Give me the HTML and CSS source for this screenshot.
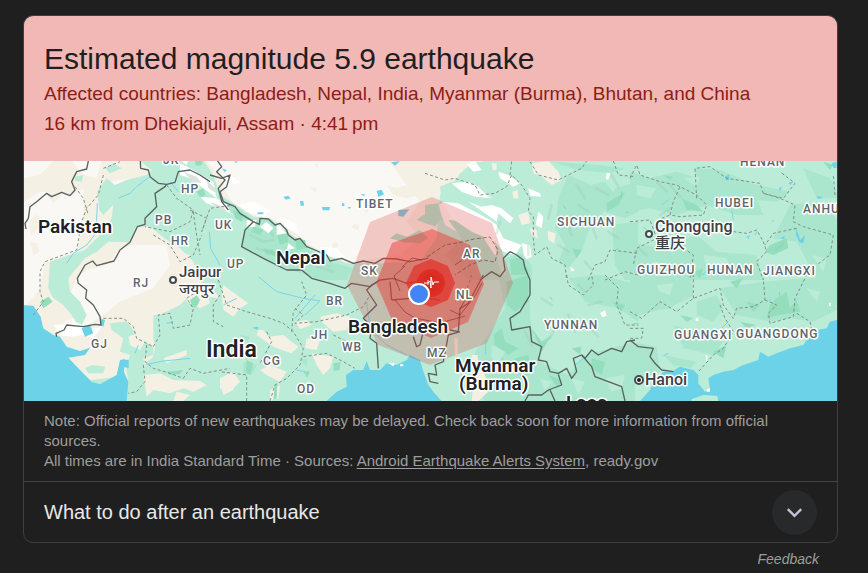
FILE: index.html
```html
<!DOCTYPE html>
<html lang="en">
<head>
<meta charset="utf-8">
<meta name="viewport" content="width=device-width, initial-scale=1">
<title>Earthquake alert</title>
<link rel="stylesheet" href="styles.css">
</head>
<body>
<main class="page">
<article class="card">
<header class="alert">
<h1 class="alert-title">Estimated magnitude 5.9 earthquake</h1>
<p class="alert-line">Affected countries: Bangladesh, Nepal, India, Myanmar (Burma), Bhutan, and China</p>
<p class="alert-line">16 km from Dhekiajuli, Assam · 4:41&#8239;pm</p>
</header>
<svg class="map" viewBox="24 161 813 240" preserveAspectRatio="xMidYMid slice" role="img" aria-label="Map of the affected area">
<defs>
<radialGradient id="core"><stop offset="0" stop-color="#d3241d"/><stop offset="1" stop-color="#df3028"/></radialGradient>
</defs>
<rect class="mint" x="24" y="161" width="813" height="240"/>
<g transform="scale(.33333333)">
<!-- north-west land -->
<g transform="translate(60 465)">
<path class="sand" d="M0 0H600L560 380L600 430L510 420L480 450L420 480L410 560L390 640L330 690L320 738H0Z"/>
<path class="pale" d="M12 140L60 110L160 120L190 100L190 200L170 290L75 320L60 400L20 450H12ZM140 0H250L230 70L190 60ZM200 345L260 330L300 280L340 270L440 270L450 330L400 400L300 440L250 480L160 540L130 500L190 480L150 420L170 370ZM265 80L330 70L300 140L260 170L250 120ZM12 18H100L60 60L12 70Z"/>
<path class="sand" d="M25 205L45 180L70 190L60 215L35 240ZM80 120L110 95L125 125L100 145ZM30 260L50 265L60 290L40 300Z"/>
<path class="mint" d="M360 18L395 45L380 60L320 75L285 90L260 70L232 110L238 165L250 180L280 150L275 190L240 240L195 285L90 320L85 400L100 430L130 450L155 480L180 520L200 480L180 440L150 410L145 370L165 345L195 310L230 290L265 260L330 262L350 215L390 215L440 255L480 280L520 320L540 375L560 400H700V0H360ZM165 65L190 60L185 80L165 78ZM255 40L280 25L305 40L270 55Z"/>
<path class="sand" d="M355 230L380 215L400 220L395 240L370 250ZM450 310L475 290L510 300L505 330L480 345Z"/>
<path class="leaf" d="M525 18H548L545 30L528 32ZM530 110L550 100L557 120L540 128ZM60 440L85 425L98 440L70 460ZM510 425L530 415L540 435L525 460L508 445Z"/>
<path class="snow" d="M480 25L510 40L545 60L580 80L590 130L550 100L510 70L480 60ZM540 125L590 130L640 160V180L600 160L560 145ZM460 0H510L500 30Z"/>
<path class="shade" d="M490 50L530 65L545 85L520 80ZM560 75L585 100L590 115L565 100ZM570 140L610 155L620 170L590 160Z"/>
<path class="river" d="M232 145L230 190L228 235L200 270L160 295L140 325M385 68L350 95L330 115L295 130M568 230L572 280L600 330M450 80L475 110"/>
</g>
<!-- Gujarat and central India -->
<g transform="translate(60 825)">
<path class="snow" d="M100 150L180 145L200 165L245 155L220 190L180 190L120 180Z"/>
<path class="sand" d="M120 190L190 180L260 200L300 250L290 300L235 328L145 250L200 240L205 220L150 215Z"/>
<path class="mint" d="M270 145L320 140L360 190L400 215L400 240L370 250L380 300L350 378H318L325 320L318 280L330 240L300 230L310 190L275 165ZM195 280L215 270L255 275L250 295L205 295ZM400 120L640 110V378H340L380 260L410 240L400 190ZM210 315L300 305L290 330L240 338Z"/>
<path class="sand" d="M325 185L350 175L375 200L360 225L330 210ZM370 300L420 295L460 315L540 318L560 330L520 350L490 340L450 355L400 345L380 365ZM430 250L500 225L500 240L440 265ZM500 80L540 100L570 85L560 55L500 60ZM600 320L650 310L640 345L610 360ZM470 350L510 360L490 378H460Z"/>
<path class="leaf" d="M440 290L490 285L480 297L450 300ZM510 75L530 60L540 75L530 95L515 90Z"/>
<path class="water" d="M0 90L40 92L62 125L70 160L100 180L120 185L140 215L180 228L210 218L195 240L145 248L180 285L215 320L240 328L290 300L300 255L315 252L312 290L325 320L320 378H0ZM185 160L210 150L220 175L195 185ZM240 130L255 135L250 155L240 150ZM313 254H326V280L313 276Z"/>
<path class="river" d="M380 268L430 258L510 250M345 235L355 210M440 145L460 140"/>
</g>
<!-- Tibet and the Himalaya -->
<g transform="translate(660 465)">
<path class="sand" d="M-60 0H840L800 30L720 60L660 120L650 250L600 320L480 325L380 325L320 300L260 270L200 230L150 190L100 185L40 145L0 120L-20 60Z"/>
<path class="pale" d="M-50 10H500L560 90L600 140L560 200L600 250L540 300L400 320L330 300L270 270L220 230L150 190L100 180L40 145L10 100L0 60Z"/>
<path class="snow" d="M60 150L100 140L150 165L130 185L80 170ZM180 190L220 200L240 240L200 220ZM30 60L60 80L40 90ZM300 275L350 280L380 310L330 305Z"/>
<path class="sand" d="M270 95L290 100L285 115ZM400 205L420 210L415 225L395 218ZM335 268L350 260L355 275L340 280ZM430 165L450 160L440 175ZM500 90L530 100L560 90L600 120L560 130L520 120ZM285 25L295 28L290 40Z"/>
<path class="fern" d="M20 145L60 165L100 195L150 195L200 235L260 280L330 320L400 340L380 375H300L200 340L130 310L65 270L75 230L90 200L60 195L30 170Z"/>
<path class="leaf" d="M40 165L70 180L65 200L45 190ZM170 235L200 225L205 260L180 270ZM225 250L255 255L260 280L230 285ZM100 215L130 225L120 240L95 232ZM210 290L260 300L280 320L230 310ZM130 280L160 285L180 305L140 298Z"/>
<path class="relief" d="M90 240L130 260L160 255M110 280L160 295M200 280L220 310L260 320M280 330L340 350M145 215L160 245M300 320L330 335"/>
<path class="snow" d="M80 195L110 195L105 215L80 218ZM120 215L140 200L160 220L145 235ZM170 205L200 235L170 240ZM205 265L225 280L200 285Z"/>
<path class="water" d="M190 125L205 123L212 130L198 134ZM240 138H250L252 152L242 152ZM306 156L330 156L328 166L308 166ZM470 108L485 104L492 118L475 126ZM535 165L568 163L550 185L535 183ZM422 118L435 117L432 123ZM366 145H373V153H366ZM113 172H130V178H113ZM382 157L394 156L388 162ZM513 22L540 18L525 32ZM5 40L20 45L15 52ZM42 18L54 20L48 24Z"/>
<path class="fern" d="M510 250L530 235L560 245L600 225L625 250L600 265L550 262ZM590 195L610 180L640 190L630 210Z"/>
</g>
<!-- eastern India and Bengal -->
<g transform="translate(660 825)">
<path class="sand" d="M10 30L50 60L85 85L60 100L40 125L10 105L5 60ZM130 165L145 185L190 180L215 200L235 215L215 235L185 225L160 215L110 180L115 165ZM225 140L260 135L275 150L240 162ZM300 125L350 115L390 125L380 165L340 170L310 145ZM260 190L300 195L290 225L255 220ZM275 235L340 245L330 280L310 300L290 270ZM120 285L150 270L200 290L180 320L140 300ZM0 310L40 290L60 320L30 350L0 340ZM150 345L180 330L175 370L150 378Z"/>
<path class="fern" d="M70 260L110 270L95 300L70 295ZM240 255L260 250L262 275ZM60 180L90 185L80 200Z"/>
<path class="leaf" d="M340 265L362 262L358 285L342 288ZM250 290L270 288L262 308ZM165 325L172 330L170 370L160 375ZM80 255L100 265L90 300L78 290Z"/>
<path class="river" d="M115 5L170 50L250 70L300 78L255 120M225 130L285 60M10 90L50 70M230 285L255 290M440 80L450 160L500 210L560 240"/>
<path class="water" d="M320 378L350 350L380 335L378 300L400 285L430 285L440 258L450 285L480 285L500 265L530 270L560 255L570 240L600 255L610 290L625 330L640 350L665 378ZM97 158L115 155L112 164Z"/>
<path class="snow" d="M505 265H525L520 274ZM540 268H550V274H540Z"/>
</g>
<!-- Arunachal, Sichuan -->
<g transform="translate(1275 465)">
<path class="mint" d="M45 95L80 80L130 90L100 60L140 25L180 18H700V400H230L235 320L215 280L150 190L50 140Z"/>
<path class="pale" d="M40 150L60 140L120 165L200 215L215 300L160 290L130 250L60 210Z"/>
<path class="fern" d="M0 150L40 145L50 190L30 215L0 200ZM70 195L130 200L170 240L215 310L235 375H130L60 300L110 250Z"/>
<path class="sand" d="M320 25L370 18L400 50L410 75L380 90L350 65L325 55ZM262 110L278 105L280 130L265 130ZM280 180L310 170L315 205L290 210ZM368 228L392 235L388 265L370 255ZM200 25L215 25L215 45L203 45ZM315 220L335 225L338 250L320 240Z"/>
<path class="snow" d="M80 85L130 80L160 95L180 115L200 130L150 125L110 110ZM125 28L150 18L170 45L145 50ZM220 50L250 60L285 85L265 95L225 70ZM310 100L345 115L348 125L315 122ZM50 140L100 145L150 170L195 195L215 210L235 250L290 270L270 300L235 290L210 260L140 230L80 190ZM130 140L170 155L200 150L230 160L265 190L255 205L220 175L215 200L180 175ZM340 170L355 185L350 220L332 210ZM545 50L558 48L550 75L543 72ZM290 265L315 270L320 305L300 315L295 290ZM435 335L450 345L440 350Z"/>
<path class="fern" d="M430 60L500 90L540 80L570 120L530 180L500 200L470 290L430 340L400 320L420 270L390 220L400 130ZM570 100L640 80V170L600 190L540 170ZM240 310L290 295L320 330V375H245ZM560 210L640 200V375H600L570 330ZM380 20L520 30L600 40L560 55L460 45Z"/>
<path class="leaf" d="M255 315L285 305L310 345V375H260ZM545 145L600 110L580 150L545 170ZM440 280L470 285L455 310Z"/>
<path class="relief" d="M455 90L480 130M460 150L490 170M500 210L515 250M400 270L430 290M515 100L550 120M425 200L440 240M550 230L580 250M310 270V300M225 200L215 235M380 150L370 190M560 60L580 95M480 320L500 345"/>
<path class="river" d="M590 110V130M415 150L422 162M602 172H612M572 285L580 280"/>
</g>
<!-- Myanmar and Yunnan -->
<g transform="translate(1275 825)">
<path class="fern" d="M220 0H315V130L320 160L345 215L340 260L430 300L400 378H180L130 300L150 230L190 180L240 100ZM430 300L480 240L630 200V378H400ZM430 10L530 0L640 30V140L580 100L480 80Z"/>
<path class="leaf" d="M245 20L310 0V80L270 110L245 90ZM205 180L230 160L240 200L280 220L250 240L210 210ZM320 160L350 200L380 180L350 230ZM500 250L540 260L530 300L500 280ZM440 220L470 215L465 240ZM560 80L600 90L590 110ZM270 250L310 240L320 290L290 310L275 280ZM370 300L410 315L400 340Z"/>
<path class="mint" d="M200 210L240 230L220 270L200 250ZM130 240L150 235L170 378H120ZM440 310L480 320L460 360ZM540 310L600 300L590 340L560 350ZM345 310L380 320L360 350Z"/>
<path class="sand" d="M140 240L158 240L160 270L180 300L190 350L160 378H140L145 320ZM88 190L98 190V240L90 240Z"/>
<path class="relief" d="M350 70L380 90M430 120L450 170M490 90L530 80M300 170L320 210M230 250L250 280M375 190L390 160M500 165L520 185M460 30L480 50"/>
<path class="snow" d="M525 115L540 105L545 122L533 127Z"/>
<path class="river" d="M182 205V240M375 65L382 75M450 270L475 250"/>
</g>
<!-- central and eastern China -->
<g transform="translate(1890 465)">
<path class="fern" d="M0 50L60 70L140 50L240 80L300 120L380 130L400 180L320 180L230 150L140 180L60 160L0 170ZM190 40L270 45L380 90L480 110L440 140L300 130L210 90ZM480 150L560 140L630 200V375H560L500 260L430 250ZM0 260L90 280L200 240L260 290L380 300L400 375H0ZM520 40L600 70L630 130H560Z"/>
<path class="mint" d="M160 70L210 65L200 95ZM20 90L80 100L60 130L20 120ZM220 300L290 310L300 340H230ZM545 300L590 310L580 350ZM70 320L110 325L100 360L60 355Z"/>
<path class="leaf" d="M420 270L470 250L475 280L430 300L405 290ZM155 130L200 150L220 170L170 165ZM100 60L130 65L120 75ZM580 20L610 30L600 45ZM190 350L220 340L210 370Z"/>
<path class="water" d="M285 65L298 58L297 76H288ZM500 220L510 255L525 240L520 265L508 262L498 240ZM605 25L620 20V40L610 38ZM447 100L455 95L450 110ZM560 122L580 128L565 132ZM450 250L465 243L462 252ZM350 245L360 240L355 252ZM475 85L490 78L482 90Z"/>
<path class="river" d="M305 165L310 195M375 240L382 228M95 150L115 135M425 200L432 195M40 215L50 225M500 225L490 215M215 360L230 350"/>
<path class="relief" d="M80 80L110 110M120 90L150 125M90 180L120 160M440 285L460 265M25 280L50 300"/>
</g>
<!-- southern China and the sea -->
<g transform="translate(1890 825)">
<path class="fern" d="M0 0H180L190 60L120 100L60 110L0 130ZM270 40L400 20L520 10H630V100L550 140L480 130L420 140L320 120ZM0 200L80 215L90 290L40 310L0 300ZM130 150L280 200L250 240L160 220ZM200 80L260 60L280 100L250 140L200 120ZM100 240L200 260L180 280L130 270Z"/>
<path class="leaf" d="M440 70L470 50L480 100L500 75L510 110L450 120L410 130L420 90ZM350 80L390 90L370 110ZM150 120L190 130L170 140ZM250 230L290 210L280 250ZM330 140L380 150L350 160ZM300 20L340 10L320 40ZM145 170L165 185L155 190Z"/>
<path class="mint" d="M80 30L130 25L120 60L90 50ZM320 210L400 220L360 250L300 240ZM530 40L570 50L560 80ZM210 20L250 25L230 45Z"/>
<path class="water" d="M630 133L600 140L590 160L560 165L530 195L520 210L480 220L440 235L415 245L390 230L385 255L340 270L310 285L280 290L250 300L235 310L240 345L225 350L205 325L205 300L190 285L150 275L125 290L100 290L70 320L60 345L30 378H630Z"/>
<path class="mint" d="M185 373L220 360L262 363L265 378H185Z"/>
<path class="snow" d="M232 342L240 340V350H230ZM197 130H205V138H197ZM227 240L233 242L230 268ZM597 83H602V93H597Z"/>
<path class="river" d="M448 50V62M420 72V78M275 160L295 140M100 242L115 235M10 146H25"/>
</g>
<!-- national borders -->
<g class="border">
<path transform="translate(60 465)" d="M205 18L200 42L170 50L155 80L165 105L150 122L125 112L95 125L80 115L50 140L30 155L25 190L15 205L18 222M360 0L362 40L385 45L390 65L415 85L440 88L435 95L405 115L410 155L375 190L375 208L352 215L330 262L300 285L282 318L230 332L218 318L195 330L172 370L175 385L200 405L197 430L220 450L240 485L243 510L225 508L190 515L140 510L132 525L108 535L110 545M440 88L465 82L475 50L510 45L540 60L570 80M580 0L605 35L590 50L615 75L595 100L605 140L625 165"/>
<path transform="translate(660 465)" d="M-30 60L5 70L30 60L20 95L0 110L10 140L45 155L60 175L100 200L118 208L120 190L145 192L165 210L180 205L200 225L205 240L225 255L240 250L260 275L285 285L320 300L330 318L365 310L400 325L430 318L465 325L490 310L530 312L570 320L625 310M100 200L75 225L65 275L130 310L200 345L245 345L275 370L330 385L375 400L395 385L450 395L480 375"/>
<path transform="translate(660 825)" d="M455 30L440 45L470 90L430 130L455 155L450 190L470 205L475 280M455 30L480 15L520 10L560 25L615 15M515 75L600 68L660 75M515 75L510 20M580 185L590 215L600 210L610 170L630 160"/>
<path transform="translate(1275 465)" d="M165 375L200 350L225 365L240 345L235 310L255 290L275 300L295 315L300 340L315 375V420L300 445L285 470L255 490L260 525L315 515L320 560L350 575L340 615L365 620L375 650L400 655L425 640L440 670L455 650L445 610L470 600L480 610L500 585L520 600L560 580L590 590L605 560L630 555"/>
<path transform="translate(1275 825)" d="M175 0L130 85L105 100L100 170L75 165M105 170L70 180L55 260L30 270L35 300L10 295L15 320L40 325M400 298L410 330L370 345L350 360H310L300 378M470 240L500 275L510 305L550 320L590 335L600 378M375 345L390 378"/>
<path transform="translate(1890 825)" d="M0 195L25 215L70 220L60 245L75 265L95 285L130 290"/>
</g>
<!-- state and province borders -->
<g class="state">
<path transform="translate(60 465)" d="M250 60L235 120L200 160L185 200L170 285L75 320L60 350V410L70 440L40 480M165 95L190 130L205 180M440 90L470 130L520 165L510 200L450 230L375 215M510 165L560 190L545 230L570 160L640 150M400 240L450 270L480 320L520 300L545 240M520 170L525 210L540 300M250 40L300 20M250 490L310 490L340 515L350 550L400 575L420 540L415 480L450 475L460 520L510 510L520 460L500 430L530 410"/>
<path transform="translate(60 825)" d="M380 210L375 260L400 280L450 295L490 310L510 280L550 295L630 280M370 270L375 320L350 350L325 355M600 60L580 90L580 140L610 155"/>
<path transform="translate(660 825)" d="M-10 0L20 90L80 110L150 130L190 145L220 170L250 220L240 270L200 310L165 330L150 378M215 170L220 110L260 60L245 20M225 100L250 120L225 145L290 140L380 120L430 95L450 60M250 245L320 235L370 260L405 280M80 378V300L0 290M140 170L155 200L120 265M340 180L380 200"/>
<path transform="translate(1275 465)" d="M0 55L60 75L90 70L150 90L165 120L210 115L245 95L260 60L290 90L315 130L310 170L325 185L325 250L330 300L365 275L380 310L420 330L425 375M315 20L340 60L400 75L430 60L470 40L485 18M255 60L260 18M565 18L580 60L630 65M490 375L510 330L540 320L555 285L600 290L640 295M540 375L600 350L640 360"/>
<path transform="translate(1890 465)" d="M0 70L20 30L30 60L90 80L140 90L200 120L230 150L220 180L150 185L120 180L130 140L150 95M200 130L195 40L240 35L290 70L390 85L400 115L450 130L495 150L490 200L520 215L610 240L600 300L560 330M400 115L460 130L495 85L450 50M615 120L610 60M310 230L350 235L380 225L400 260L410 290L380 320L400 375M500 220L430 235L405 270M0 200L60 195L80 250L20 280L10 330M160 280L190 300L180 370M95 190L120 180"/>
<path transform="translate(1890 825)" d="M0 110L35 130L90 80L140 110L190 70L270 40L280 90L310 130L320 100L370 95L405 75L400 10M190 70V0M270 90L285 130L310 170L280 220L250 240L205 290M405 75L440 90L415 115L420 145L490 125L495 70L530 0M500 115L540 140L545 165M0 160H40L35 190L0 190"/>
<path transform="translate(1275 825)" d="M425 0L430 30L475 60L505 30L500 0M540 0L580 40L575 90L600 150H640M140 0L120 60L90 80"/>
</g>
</g>
<!-- intensity rings -->
<path class="ring-outer" d="M432 197L492 223L513 283L487 343L430 365L378 345L347 285L370 222Z"/>
<path class="ring-middle" d="M432 229L470 245L484 284L468 322L431 338L393 322L376 283L392 243Z"/>
<path class="ring-inner" d="M431 259L448 266L455 283L448 300L431 307L413 300L406 283L414 266Z"/>
<g class="tremor"><path d="M402 267L412 258L422 260M455 265L466 257L480 248M450 310L460 315L475 296L482 283M395 300L405 312L415 318L440 323L465 316M455 292L465 300L460 309M400 291L394 276L405 266"/><path stroke-dasharray="4 2" d="M427 257L445 245L462 242L474 239L490 237L498 250L495 262L483 260L470 265L455 275"/></g>
<g class="labels">
<g class="region">
<text x="181" y="193">HP</text><text x="155" y="224">PB</text><text x="171" y="245">HR</text><text x="215" y="229">UK</text><text x="227" y="268">UP</text><text x="133" y="287">RJ</text><text x="91" y="348">GJ</text><text x="163" y="164">JK</text>
<text x="326" y="305">BR</text><text x="311" y="339">JH</text><text x="342" y="351">WB</text><text x="263" y="365">CG</text><text x="297" y="393">OD</text><text x="361" y="275">SK</text><text x="463" y="258">AR</text><text x="456" y="299">NL</text><text x="427" y="357">MZ</text>
<text x="356" y="208">TIBET</text><text x="557" y="226">SICHUAN</text><text x="715" y="207">HUBEI</text><text x="740" y="166">HENAN</text><text x="803" y="213">ANHUI</text><text x="637" y="274">GUIZHOU</text><text x="707" y="274">HUNAN</text><text x="763" y="275">JIANGXI</text><text x="544" y="329">YUNNAN</text><text x="674" y="339">GUANGXI</text><text x="736" y="338">GUANGDONG</text>
</g>
<g class="country">
<text x="38" y="233">Pakistan</text><text x="276" y="264">Nepal</text><text x="348" y="333">Bangladesh</text><text x="455" y="372">Myanmar</text><text x="459" y="390">(Burma)</text><text x="566" y="409">Laos</text><text class="large" x="206" y="357">India</text>
</g>
<g class="city">
<text x="179" y="277">Jaipur</text><text x="179" y="294">जयपुर</text><text class="wide" x="655" y="232">Chongqing</text><text class="cjk" x="655" y="248">重庆</text><text class="wide" x="645" y="385">Hanoi</text>
</g>
</g>
<circle class="town" cx="173" cy="280" r="3"/><circle class="town" cx="649" cy="234" r="3"/><circle class="town" cx="639" cy="380" r="4"/><circle class="town-dot" cx="639" cy="380" r="2"/>
<circle cx="431" cy="283" r="14" fill="url(#core)"/>
<path class="spark" d="M424 283H428L430 281L431 288L431 277L433 285L434 282H439M428 280V285"/>
<circle class="position" cx="419" cy="294" r="10"/>
</svg>
<section class="note">
<p>Note: Official reports of new earthquakes may be delayed. Check back soon for more information from official sources.</p>
<p>All times are in India Standard Time · Sources: <a href="#sources">Android Earthquake Alerts System</a>, ready.gov</p>
</section>
<section class="advice">
<h2 id="advice-title">What to do after an earthquake</h2>
<button class="toggle" type="button" aria-expanded="false" aria-labelledby="advice-title">
<svg viewBox="0 0 24 24" width="23" height="23" aria-hidden="true"><path d="M5 8.500L12 15.500L19 8.500"/></svg>
</button>
</section>
</article>
<footer class="footer"><a href="#feedback">Feedback</a></footer>
</main>
</body>
</html>
```
FILE: styles.css
```css
* { box-sizing: border-box; }
body { margin: 0; background: #1f1f1f; color: #e8e8e8; font-family: "Liberation Sans", Arial, sans-serif; }
h1, h2, p { margin: 0; font-weight: 400; }
.page { padding: 15px 30px 0 23px; }
.card { overflow: hidden; border: 1px solid #3c4043; border-radius: 10px; }
.alert { padding: 24px 20px 22px; background: #f2b8b5; color: #8c1d18; }
.alert-title { padding-bottom: 2px; color: #1f1f1f; font-size: 30px; line-height: 37px; }
.alert-line { font-size: 19px; line-height: 30px; }
.map { display: block; width: 100%; height: 240px; }
.note { padding: 10px 20px; border-bottom: 1px solid #444; color: #9e9e9e; font-size: 15px; line-height: 20px; }
.note a { color: inherit; text-underline-offset: 2px; }
.advice { display: flex; align-items: center; justify-content: space-between; padding: 8px 20px 7px; }
.advice h2 { padding-bottom: 2px; font-size: 20px; line-height: 26px; }
.toggle { display: grid; place-items: center; width: 45px; height: 45px; padding: 0; border: 0; border-radius: 50%; background: #28292a; }
.toggle path { fill: none; stroke: #c4c0d6; stroke-width: 2.5; }
.footer { padding: 7px 19px 0; font-size: 14px; line-height: 18px; text-align: right; }
.footer a { color: #9e9e9e; font-style: italic; text-decoration: none; }

.mint { fill: #bbecd8; }
.fern { fill: #a9e6cd; }
.leaf { fill: #94debd; }
.sand { fill: #f4f0e4; }
.pale { fill: #faf8f4; }
.snow { fill: #fff; }
.shade { fill: #dde2df; }
.water { fill: #6cd2e8; }
.river { fill: none; stroke: #79d5ea; stroke-width: 3; }
.relief { fill: none; stroke: #97c8b5; stroke-width: 8; stroke-linejoin: round; stroke-linecap: round; opacity: .3; }
.border { fill: none; stroke: #58625f; stroke-width: 4; stroke-linejoin: round; }
.state { fill: none; stroke: #82908a; stroke-width: 3; stroke-dasharray: 9 7; }
.ring-outer { fill: #dc3c3c; opacity: .26; }
.ring-middle { fill: #e93830; opacity: .47; }
.ring-inner { fill: #e32e26; opacity: .7; }
.tremor { fill: none; stroke: #7c3030; opacity: .6; }
.spark { fill: none; stroke: #fff; }
.position { fill: #4285f4; stroke: #fff; stroke-width: 2; }

.labels { font-family: Roboto, "Noto Sans", sans-serif; paint-order: stroke; stroke: #fff; stroke-width: 3; stroke-linejoin: round; }
.region { font-size: 12px; font-weight: 500; letter-spacing: 1px; fill: #5b666b; }
.country { font-size: 19px; font-weight: 600; fill: #202124; }
.large { font-size: 23px; }
.city { font-size: 15px; font-weight: 500; fill: #3c4043; }
.wide { font-size: 16px; }
.cjk { font-family: "Noto Sans CJK SC", sans-serif; }
.town { fill: #fff; stroke: #444b4f; stroke-width: 2; }
.town-dot { fill: #222; }
```
